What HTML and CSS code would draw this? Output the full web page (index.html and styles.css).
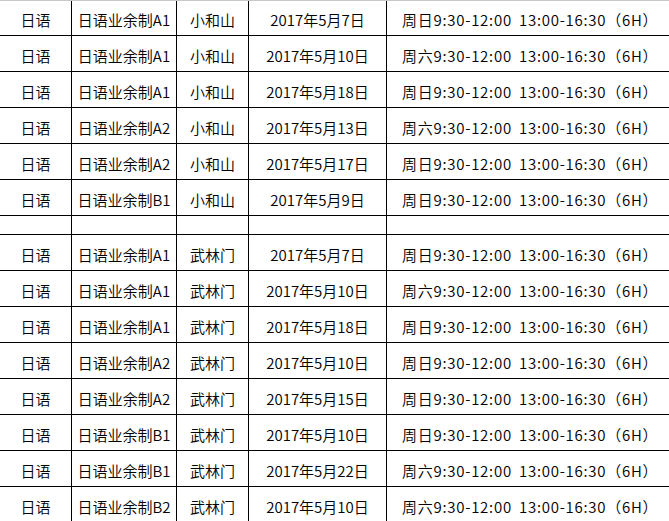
FILE: index.html
```html
<!DOCTYPE html>
<html lang="zh-CN">
<head>
<meta charset="utf-8">
<title>日语课程安排</title>
<link rel="stylesheet" href="styles.css">
</head>
<body>
<div class="sheet">
  <div class="c">日语</div><div class="c">日语业余制A1</div><div class="c">小和山</div><div class="c">2017年5月7日</div><div class="c t">周日9:30-12:00 13:00-16:30（6H）</div>
  <div class="c">日语</div><div class="c">日语业余制A1</div><div class="c">小和山</div><div class="c">2017年5月10日</div><div class="c t">周六9:30-12:00 13:00-16:30（6H）</div>
  <div class="c">日语</div><div class="c">日语业余制A1</div><div class="c">小和山</div><div class="c">2017年5月18日</div><div class="c t">周日9:30-12:00 13:00-16:30（6H）</div>
  <div class="c">日语</div><div class="c">日语业余制A2</div><div class="c">小和山</div><div class="c">2017年5月13日</div><div class="c t">周六9:30-12:00 13:00-16:30（6H）</div>
  <div class="c">日语</div><div class="c">日语业余制A2</div><div class="c">小和山</div><div class="c">2017年5月17日</div><div class="c t">周日9:30-12:00 13:00-16:30（6H）</div>
  <div class="c">日语</div><div class="c">日语业余制B1</div><div class="c">小和山</div><div class="c">2017年5月9日</div><div class="c t">周日9:30-12:00 13:00-16:30（6H）</div>
  <div class="c"></div><div class="c"></div><div class="c"></div><div class="c"></div><div class="c t"></div>
  <div class="c">日语</div><div class="c">日语业余制A1</div><div class="c">武林门</div><div class="c">2017年5月7日</div><div class="c t">周日9:30-12:00 13:00-16:30（6H）</div>
  <div class="c">日语</div><div class="c">日语业余制A1</div><div class="c">武林门</div><div class="c">2017年5月10日</div><div class="c t">周六9:30-12:00 13:00-16:30（6H）</div>
  <div class="c">日语</div><div class="c">日语业余制A1</div><div class="c">武林门</div><div class="c">2017年5月18日</div><div class="c t">周日9:30-12:00 13:00-16:30（6H）</div>
  <div class="c">日语</div><div class="c">日语业余制A2</div><div class="c">武林门</div><div class="c">2017年5月10日</div><div class="c t">周日9:30-12:00 13:00-16:30（6H）</div>
  <div class="c">日语</div><div class="c">日语业余制A2</div><div class="c">武林门</div><div class="c">2017年5月15日</div><div class="c t">周日9:30-12:00 13:00-16:30（6H）</div>
  <div class="c">日语</div><div class="c">日语业余制B1</div><div class="c">武林门</div><div class="c">2017年5月10日</div><div class="c t">周日9:30-12:00 13:00-16:30（6H）</div>
  <div class="c">日语</div><div class="c">日语业余制B1</div><div class="c">武林门</div><div class="c">2017年5月22日</div><div class="c t">周六9:30-12:00 13:00-16:30（6H）</div>
  <div class="c">日语</div><div class="c">日语业余制B2</div><div class="c">武林门</div><div class="c">2017年5月10日</div><div class="c t">周六9:30-12:00 13:00-16:30（6H）</div>
</div>
</body>
</html>
```
FILE: styles.css
```css
html, body {
  margin: 0;
  padding: 0;
  background: #ffffff;
  overflow: hidden;
}
.sheet {
  display: grid;
  width: 680px;
  grid-template-columns: 71px 104px 71px 137px 1fr;
  grid-template-rows: 34px repeat(5, 35px) 18px repeat(8, 35px);
  gap: 1px;
  background: #000000;
  border-top: 1px solid #c8c8c8;
}
.c {
  background: #ffffff;
  display: flex;
  align-items: center;
  justify-content: center;
  padding-top: 3px;
  box-sizing: border-box;
  font-family: "Noto Sans CJK SC", sans-serif;
  font-size: 15px;
  font-weight: 350;
  line-height: 1;
  color: #000000;
  white-space: nowrap;
}
.t {
  justify-content: flex-start;
  padding-left: 15px;
  letter-spacing: 0.75px;
  word-spacing: 3px;
}
```
